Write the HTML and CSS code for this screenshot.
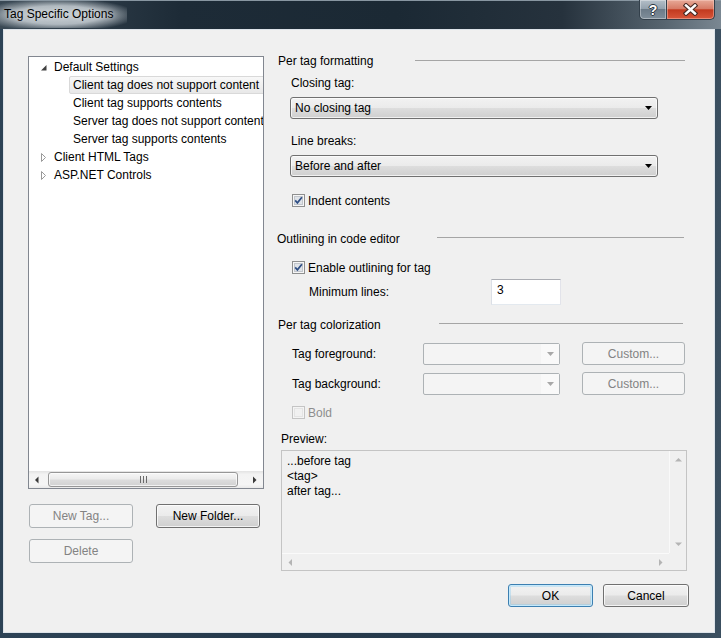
FILE: index.html
```html
<!DOCTYPE html>
<html lang="en">
<head>
<meta charset="utf-8">
<title>Tag Specific Options</title>
<link rel="stylesheet" href="styles.css">
</head>
<body>
<div class="window">
  <div class="titlebar">
    <span class="title">Tag Specific Options</span>
    <div class="caption">
      <div class="cap-btn cap-help"><span class="cap-q">?</span></div>
      <div class="cap-btn cap-close">
        <svg width="15" height="13" viewBox="0 0 15 13"><path d="M3 2.5 L12 10.5 M12 2.5 L3 10.5" stroke="#4a2a24" stroke-width="4.6" stroke-linecap="square" fill="none"/><path d="M3 2.5 L12 10.5 M12 2.5 L3 10.5" stroke="#ffffff" stroke-width="2.4" stroke-linecap="square" fill="none"/></svg>
      </div>
    </div>
  </div>
  <div class="client">
    <div class="main">
      <div class="left">
        <div class="tree">
          <ul class="tree-list">
            <li class="tree-row lvl0">
              <svg class="toggle" width="17" height="18" viewBox="0 0 17 18"><polygon points="9.5,7 9.5,12.5 4,12.5" fill="#404040"/></svg>
              <span>Default Settings</span>
            </li>
            <li class="tree-row lvl1"><span class="item selected">Client tag does not support content</span></li>
            <li class="tree-row lvl1"><span class="item">Client tag supports contents</span></li>
            <li class="tree-row lvl1"><span class="item">Server tag does not support content</span></li>
            <li class="tree-row lvl1"><span class="item">Server tag supports contents</span></li>
            <li class="tree-row lvl0">
              <svg class="toggle" width="17" height="18" viewBox="0 0 17 18"><polygon points="4.5,5.5 8.5,9.5 4.5,13.5" fill="#ffffff" stroke="#9a9a9a"/></svg>
              <span>Client HTML Tags</span>
            </li>
            <li class="tree-row lvl0">
              <svg class="toggle" width="17" height="18" viewBox="0 0 17 18"><polygon points="4.5,5.5 8.5,9.5 4.5,13.5" fill="#ffffff" stroke="#9a9a9a"/></svg>
              <span>ASP.NET Controls</span>
            </li>
          </ul>
          <div class="hscroll">
            <div class="sb-btn"><svg width="17" height="16" viewBox="0 0 17 16"><polygon points="9.5,4.5 6,8 9.5,11.5" fill="#3a3a3a"/></svg></div>
            <div class="sb-thumb">
              <svg width="9" height="7" viewBox="0 0 9 7"><path d="M1.5 0 V7 M4.5 0 V7 M7.5 0 V7" stroke="#6a6a6a" stroke-width="1"/></svg>
            </div>
            <div class="sb-track"></div>
            <div class="sb-btn"><svg width="17" height="16" viewBox="0 0 17 16"><polygon points="7,4.5 10.5,8 7,11.5" fill="#3a3a3a"/></svg></div>
          </div>
        </div>
        <div class="btn-row">
          <div class="btn btn-disabled btn-left">New Tag...</div>
          <div class="btn btn-left">New Folder...</div>
        </div>
        <div class="btn-row btn-row-second">
          <div class="btn btn-disabled btn-left">Delete</div>
        </div>
      </div>

      <div class="right">
        <div class="group-head">
          <span>Per tag formatting</span>
          <span class="rule rule-a"></span>
        </div>
        <div class="field-label label-first">Closing tag:</div>
        <div class="select">
          <span>No closing tag</span>
          <svg width="7" height="4" viewBox="0 0 7 4"><polygon points="0,0 7,0 3.5,4" fill="#000"/></svg>
        </div>
        <div class="field-label label-second">Line breaks:</div>
        <div class="select">
          <span>Before and after</span>
          <svg width="7" height="4" viewBox="0 0 7 4"><polygon points="0,0 7,0 3.5,4" fill="#000"/></svg>
        </div>
        <div class="check check-indent">
          <svg class="cb" width="13" height="13" viewBox="0 0 13 13"><rect x="0.5" y="0.5" width="12" height="12" fill="#f6f6f6" stroke="#8e8f8f"/><rect x="2.5" y="2.5" width="8" height="8" fill="#dfe3e8" stroke="#c2c6cc"/><path d="M3.2 6.4 L5.4 8.9 L9.9 3.3" stroke="#2f4f85" stroke-width="1.7" fill="none"/></svg>
          <span>Indent contents</span>
        </div>

        <div class="group-head head-outline">
          <span>Outlining in code editor</span>
          <span class="rule rule-b"></span>
        </div>
        <div class="check check-outline">
          <svg class="cb" width="13" height="13" viewBox="0 0 13 13"><rect x="0.5" y="0.5" width="12" height="12" fill="#f6f6f6" stroke="#8e8f8f"/><rect x="2.5" y="2.5" width="8" height="8" fill="#dfe3e8" stroke="#c2c6cc"/><path d="M3.2 6.4 L5.4 8.9 L9.9 3.3" stroke="#2f4f85" stroke-width="1.7" fill="none"/></svg>
          <span>Enable outlining for tag</span>
        </div>
        <div class="min-row">
          <span class="min-label">Minimum lines:</span>
          <div class="textbox">3</div>
        </div>

        <div class="group-head head-color">
          <span>Per tag colorization</span>
          <span class="rule rule-c"></span>
        </div>
        <div class="color-row color-first">
          <span class="color-label">Tag foreground:</span>
          <div class="combo-disabled">
            <div class="combo-btn"><svg width="7" height="4" viewBox="0 0 7 4"><polygon points="0,0 7,0 3.5,4" fill="#a8a8a8"/></svg></div>
          </div>
          <div class="btn btn-disabled btn-custom">Custom...</div>
        </div>
        <div class="color-row color-second">
          <span class="color-label">Tag background:</span>
          <div class="combo-disabled">
            <div class="combo-btn"><svg width="7" height="4" viewBox="0 0 7 4"><polygon points="0,0 7,0 3.5,4" fill="#a8a8a8"/></svg></div>
          </div>
          <div class="btn btn-disabled btn-custom">Custom...</div>
        </div>
        <div class="check check-bold">
          <svg class="cb" width="13" height="13" viewBox="0 0 13 13"><rect x="0.5" y="0.5" width="12" height="12" fill="#f4f4f4" stroke="#c4c4c4"/><rect x="2.5" y="2.5" width="8" height="8" fill="#f1f1f1" stroke="#e4e4e4"/></svg>
          <span class="disabled-text">Bold</span>
        </div>

        <div class="preview-label">Preview:</div>
        <div class="preview">
          <div class="preview-text">...before tag<br>&lt;tag&gt;<br>after tag...</div>
          <div class="vscroll">
            <svg width="17" height="17" viewBox="0 0 17 17"><polygon points="5,10.5 12,10.5 8.5,7" fill="#b4b4b4"/></svg>
            <svg width="17" height="17" viewBox="0 0 17 17"><polygon points="5,6.5 12,6.5 8.5,10" fill="#b4b4b4"/></svg>
          </div>
          <div class="hscroll-dis">
            <svg width="17" height="17" viewBox="0 0 17 17"><polygon points="10,5 10,12 6.5,8.5" fill="#b4b4b4"/></svg>
            <svg width="17" height="17" viewBox="0 0 17 17"><polygon points="7,5 7,12 10.5,8.5" fill="#b4b4b4"/></svg>
          </div>
          <div class="corner"></div>
        </div>
      </div>
    </div>
    <div class="footer">
      <div class="btn btn-ok">OK</div>
      <div class="btn btn-cancel">Cancel</div>
    </div>
  </div>
</div>
</body>
</html>
```
FILE: styles.css
```css
* { box-sizing: border-box; }
html, body { margin: 0; padding: 0; }
body {
  width: 721px;
  height: 638px;
  overflow: hidden;
  font-family: "Liberation Sans", Arial, sans-serif;
  font-size: 12px;
  color: #000;
  background: #27394a;
}
.window {
  width: 721px;
  height: 638px;
  display: flex;
  flex-direction: column;
  background: linear-gradient(to right, #2d4356 0%, #25394b 40%, #2a3e50 80%, #3b4f60 100%);
}

/* title bar */
.titlebar {
  height: 29px;
  flex: none;
  display: flex;
  justify-content: space-between;
  align-items: flex-start;
  padding-right: 6px;
  background: linear-gradient(to right, #3a4955 0%, #1d2b37 25%, #1b2934 55%, #26323d 78%, #56646f 92%, #7a8792 100%);
  box-shadow: inset 0 1px 0 #8896a1;
}
.title {
  height: 27px;
  margin-top: 1px;
  padding: 0 14px 0 4px;
  line-height: 27px;
  color: #000;
  background: radial-gradient(ellipse 62% 62% at 46% 52%, rgba(198,205,210,1) 0%, rgba(190,198,204,0.9) 55%, rgba(170,180,188,0) 100%);
  text-shadow: 0 0 6px rgba(255,255,255,0.7);
}
.caption { display: flex; }
.cap-btn {
  height: 20px;
  display: flex;
  align-items: center;
  justify-content: center;
  border: 1px solid #33404b;
  border-top: none;
}
.cap-btn svg { display: block; }
.cap-help {
  width: 28px;
  border-radius: 0 0 0 5px;
  background: linear-gradient(#b4bfc8 0%, #94a2ae 45%, #6c7b88 50%, #7f8e9a 100%);
  box-shadow: inset 0 0 0 1px rgba(255,255,255,0.35);
}
.cap-q {
  color: #fff;
  font-weight: bold;
  font-size: 14px;
  line-height: 14px;
  text-shadow: 1px 0 0 #2c3640, -1px 0 0 #2c3640, 0 1px 0 #2c3640, 0 -1px 0 #2c3640;
}
.cap-close {
  width: 48px;
  border-left: none;
  border-radius: 0 0 5px 0;
  background: linear-gradient(#e7a997 0%, #d77c67 45%, #c23a1f 52%, #d8563a 100%);
  box-shadow: inset 0 0 0 1px rgba(255,220,210,0.4);
}

/* client */
.client {
  flex: 1;
  margin: 0 6px 5px 3px;
  background: #f0f0f0;
  border: 1px solid #dde3e9;
  display: flex;
  flex-direction: column;
}
.main { display: flex; align-items: flex-start; }
.left {
  flex: none;
  width: 236px;
  margin-left: 24px;
  margin-top: 26px;
}
.right {
  flex: none;
  width: 411px;
  margin-left: 12px;
  padding-top: 24px;
  display: flex;
  flex-direction: column;
  align-items: flex-start;
}

/* tree */
.tree {
  height: 433px;
  border: 1px solid #828790;
  background: #fff;
  display: flex;
  flex-direction: column;
  overflow: hidden;
}
.tree-list {
  flex: 1;
  list-style: none;
  margin: 0;
  padding: 1px 0 0;
  white-space: nowrap;
  overflow: hidden;
}
.tree-row {
  height: 18px;
  display: flex;
  align-items: center;
}
.lvl0 { padding-left: 8px; }
.lvl0 .toggle { flex: none; }
.lvl1 { padding-left: 40px; }
.item {
  height: 18px;
  line-height: 16px;
  padding: 0 3px;
  border: 1px solid transparent;
  border-radius: 2px;
}
.item.selected {
  border-color: #d9d9d9;
  background: linear-gradient(#f8f8f8, #e8e8e8);
  padding-right: 20px;
}
.hscroll {
  height: 17px;
  flex: none;
  display: flex;
  align-items: center;
  background: linear-gradient(#e3e3e3, #f3f3f3 20%, #f5f5f5 80%, #e9e9e9);
}
.sb-btn { width: 17px; height: 16px; flex: none; }
.sb-btn svg { display: block; }
.sb-thumb {
  width: 190px;
  height: 15px;
  margin-left: 2px;
  border: 1px solid #979797;
  border-radius: 3px;
  background: linear-gradient(#f6f6f6 0%, #ececec 45%, #dcdcdc 55%, #d2d2d2 100%);
  box-shadow: inset 0 0 0 1px rgba(255,255,255,0.7);
  display: flex;
  align-items: center;
  justify-content: center;
}
.sb-thumb svg { display: block; }
.sb-track { flex: 1; }

/* buttons */
.btn {
  height: 24px;
  display: flex;
  align-items: center;
  justify-content: center;
  border: 1px solid #707070;
  border-radius: 3px;
  background: linear-gradient(#f2f2f2 0%, #ebebeb 48%, #dddddd 52%, #cfcfcf 100%);
  box-shadow: inset 0 0 0 1px rgba(255,255,255,0.75);
  color: #000;
}
.btn-disabled {
  border-color: #adb2b5;
  background: #f4f4f4;
  box-shadow: none;
  color: #838383;
}
.btn-row {
  display: flex;
  gap: 23px;
  margin-top: 15px;
  margin-left: 1px;
}
.btn-row-second { margin-top: 11px; }
.btn-left { width: 104px; }
.btn-custom { width: 103px; height: 23px; margin-left: 22px; }

.footer {
  display: flex;
  justify-content: flex-end;
  gap: 10px;
  margin-top: 13px;
  padding-right: 25px;
}
.btn-ok {
  width: 85px;
  height: 23px;
  border-color: #3c7fb1;
  box-shadow: inset 0 0 0 1px #c5e9fb, inset 0 0 0 2px rgba(130,200,240,0.35);
}
.btn-cancel { width: 86px; height: 23px; }

/* right column */
.group-head {
  width: 100%;
  height: 15px;
  line-height: 15px;
  display: flex;
  padding-left: 2px;
}
.rule {
  height: 1px;
  background: #a5a5a5;
  margin-left: auto;
  margin-right: 2px;
}
.rule-a { width: 270px; margin-top: 6px; }
.rule-b { width: 247px; margin-top: 5px; margin-right: 3px; }
.rule-c { width: 244px; margin-top: 5px; margin-right: 4px; }
.head-outline { margin-top: 24px; padding-left: 1px; }
.head-color { margin-top: 13px; }

.field-label {
  line-height: 15px;
  padding-left: 15px;
}
.label-first { margin-top: 7px; }
.label-second { margin-top: 15px; }
.select {
  width: 368px;
  height: 22px;
  margin-top: 6px;
  margin-left: 14px;
  border: 1px solid #707070;
  border-radius: 3px;
  background: linear-gradient(#f2f2f2 0%, #ebebeb 48%, #dddddd 52%, #cfcfcf 100%);
  box-shadow: inset 0 0 0 1px rgba(255,255,255,0.7);
  display: flex;
  align-items: center;
  justify-content: space-between;
  padding: 0 5px 0 4px;
}
.select svg { display: block; }

.check {
  height: 15px;
  display: flex;
  align-items: center;
  gap: 3px;
  margin-left: 16px;
}
.cb { display: block; flex: none; }
.check-indent { margin-top: 16px; }
.check-outline { margin-top: 13px; }
.check-bold { margin-top: 10px; }
.disabled-text { color: #8d8d8d; }

.min-row {
  height: 26px;
  margin-top: 4px;
  display: flex;
  align-items: center;
}
.min-label { width: 182px; padding-left: 33px; box-sizing: content-box; }
.textbox {
  width: 70px;
  height: 26px;
  background: #fff;
  border: 1px solid;
  border-color: #abadb3 #e2e3ea #e3e9ef #dbdfe6;
  padding: 3px 0 0 5px;
  line-height: 15px;
  align-self: flex-start;
}

.color-row {
  height: 23px;
  display: flex;
  align-items: center;
  margin-left: 16px;
}
.color-first { margin-top: 9px; }
.color-second { margin-top: 7px; }
.color-label { width: 131px; }
.combo-disabled {
  width: 137px;
  height: 22px;
  border: 1px solid #adb2b5;
  border-radius: 2px;
  background: #f4f4f4;
  display: flex;
  justify-content: flex-end;
}
.combo-btn {
  width: 18px;
  height: 20px;
  background: #f9f9f9;
  display: flex;
  align-items: center;
  justify-content: center;
}
.combo-btn svg { display: block; }

.preview-label {
  margin-top: 12px;
  padding-left: 5px;
  line-height: 15px;
}
.preview {
  width: 406px;
  height: 121px;
  margin-top: 3px;
  margin-left: 5px;
  border: 1px solid #c4c4c4;
  background: #f0f0f0;
  display: grid;
  grid-template-columns: 1fr 17px;
  grid-template-rows: 1fr 17px;
}
.preview-text {
  padding: 3px 5px 0;
  line-height: 15px;
}
.vscroll {
  display: flex;
  flex-direction: column;
  justify-content: space-between;
  border-left: 1px solid #f9f9f9;
}
.vscroll svg, .hscroll-dis svg { display: block; }
.hscroll-dis {
  display: flex;
  justify-content: space-between;
  border-top: 1px solid #fafafa;
}
.corner { background: #f0f0f0; }
```
